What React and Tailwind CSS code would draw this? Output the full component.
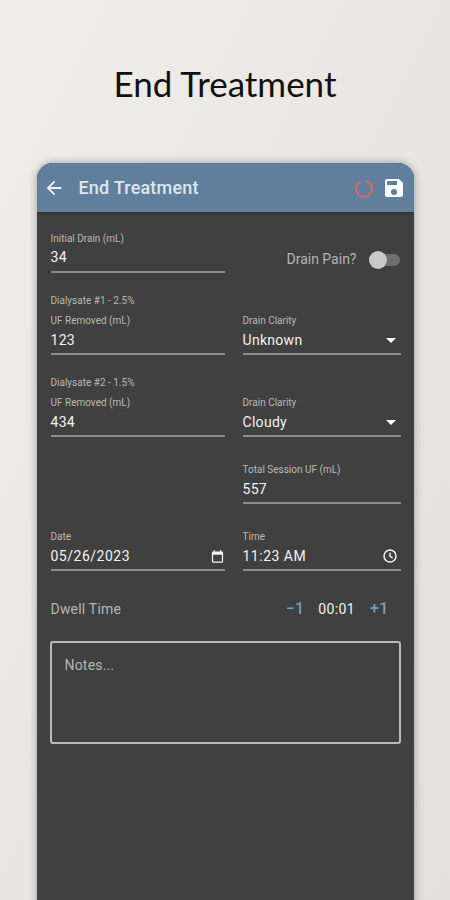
function Field({ label, children, right, tight, wide }) {
  return (
    <div className="flex flex-col">
      <div className="h-[14px] text-[10px] leading-[14px] text-[#b8b8b8]">{label}</div>
      <div
        className={`flex h-[20px] items-center justify-between text-[14px] text-[#f2f2f2] ${tight ? "mt-[1px]" : "mt-[2px]"} ${wide ? "tracking-[0.5px]" : "tracking-[0.3px]"}`}
      >
        <span>{children}</span>
        {right}
      </div>
      <div className={`${tight ? "mt-[4px]" : "mt-[3px]"} h-[2px] bg-[#8c8c8c]`} />
    </div>
  );
}

function Caret() {
  return <span className="mr-[5px] h-0 w-0 border-x-[5px] border-t-[5px] border-x-transparent border-t-white" />;
}

function CalendarIcon() {
  return (
    <svg viewBox="0 0 24 24" className="h-[15px] w-[15px]" fill="#f2f2f2">
      <path d="M19 4h-1V2h-2v2H8V2H6v2H5a2 2 0 0 0-2 2v14a2 2 0 0 0 2 2h14a2 2 0 0 0 2-2V6a2 2 0 0 0-2-2zm0 16H5V9h14v11z" />
    </svg>
  );
}

function ClockIcon() {
  return (
    <svg viewBox="0 0 24 24" className="mr-[3px] h-[16px] w-[16px]" fill="none" stroke="#f2f2f2" strokeWidth="2.2">
      <circle cx="12" cy="12" r="9" />
      <path d="M12 7v5.5l4 2.4" />
    </svg>
  );
}

export default function App() {
  return (
    <div className="flex h-[900px] w-[450px] flex-col items-center overflow-hidden bg-gradient-to-br from-[#f0eeea] to-[#e3e0dc] font-['Roboto',sans-serif]">
      <h1 className="mt-[60px] h-[46px] text-center font-['Lato',sans-serif] text-[35px] leading-[46px] text-[#111111]">
        End Treatment
      </h1>

      <div className="mt-[57px] flex h-[800px] w-[377px] shrink-0 flex-col overflow-hidden rounded-t-[16px] bg-[#404040] shadow-[0_0_8px_rgba(0,0,0,0.35)]">
        <header className="flex h-[49px] shrink-0 items-center bg-[#5f7f9c] pl-[6px] pr-[8px] shadow-[0_1px_3px_rgba(0,0,0,0.4)]">
          <svg viewBox="0 0 24 24" className="h-[22px] w-[22px]" fill="#f2f2f2">
            <path d="M20 11H7.83l5.59-5.59L12 4l-8 8 8 8 1.41-1.41L7.83 13H20v-2z" />
          </svg>
          <span className="ml-[14px] text-[18px] font-medium tracking-[0.2px] text-[#dfe6ec]">End Treatment</span>
          <svg viewBox="0 0 20 20" className="ml-auto h-[20px] w-[20px]" fill="none">
            <path d="M12.5 2.6 A8 8 0 1 1 5.5 3.6" stroke="#cf6a62" strokeWidth="2.2" strokeLinecap="round" transform="translate(0 0.5)" />
          </svg>
          <svg viewBox="0 0 24 24" className="ml-[8px] h-[24px] w-[24px]" fill="#ffffff">
            <path d="M17 3H5a2 2 0 0 0-2 2v14a2 2 0 0 0 2 2h14a2 2 0 0 0 2-2V7l-4-4zm-5 16a3 3 0 1 1 0-6 3 3 0 0 1 0 6zm3-10H5V5h10v4z" />
          </svg>
        </header>

        <div className="flex flex-col px-[14px] pt-[20px]">
          <div className="flex items-end">
            <div className="w-[174px]">
              <Field label="Initial Drain (mL)" tight>34</Field>
            </div>
            <div className="mb-[3px] ml-auto flex items-center">
              <span className="text-[14px] text-[#b5b5b5]">Drain Pain?</span>
              <span className="relative ml-[12px] h-[12px] w-[31px] rounded-full bg-[#6f6f6f]">
                <span className="absolute left-0 top-[-3px] h-[18px] w-[18px] rounded-full bg-[#c9c9c9]" />
              </span>
            </div>
          </div>

          <div className="mt-[21px] h-[14px] text-[10px] leading-[14px] text-[#b8b8b8]">Dialysate #1 - 2.5%</div>
          <div className="mt-[6px] grid grid-cols-[174px_158px] gap-x-[18px]">
            <Field label="UF Removed (mL)">123</Field>
            <Field label="Drain Clarity" right={<Caret />}>Unknown</Field>
          </div>

          <div className="mt-[21px] h-[14px] text-[10px] leading-[14px] text-[#b8b8b8]">Dialysate #2 - 1.5%</div>
          <div className="mt-[6px] grid grid-cols-[174px_158px] gap-x-[18px]">
            <Field label="UF Removed (mL)">434</Field>
            <Field label="Drain Clarity" right={<Caret />}>Cloudy</Field>
          </div>

          <div className="mt-[26px] grid grid-cols-[174px_158px] gap-x-[18px]">
            <div />
            <Field label="Total Session UF (mL)">557</Field>
          </div>

          <div className="mt-[26px] grid grid-cols-[174px_158px] gap-x-[18px]">
            <Field label="Date" wide right={<CalendarIcon />}>05/26/2023</Field>
            <Field label="Time" wide right={<ClockIcon />}>11:23 AM</Field>
          </div>

          <div className="mt-[28px] flex h-[20px] items-center text-[14px] tracking-[0.2px]">
            <span className="text-[#b5b5b5]">Dwell Time</span>
            <div className="ml-auto mr-[11px] flex items-center">
              <span className="text-[16px] font-medium text-[#6f9fc4]">−1</span>
              <span className="ml-[14px] tracking-[0.4px] text-[#f0f0f0]">00:01</span>
              <span className="ml-[15px] text-[16px] font-medium text-[#6f9fc4]">+1</span>
            </div>
          </div>

          <div className="-mx-px mt-[22px] h-[103px] rounded-[3px] border-2 border-[#bababa] px-[13px] py-[13px] text-[14px] leading-[18px] tracking-[0.2px] text-[#b5b5b5]">
            Notes...
          </div>
        </div>
      </div>
    </div>
  );
}
